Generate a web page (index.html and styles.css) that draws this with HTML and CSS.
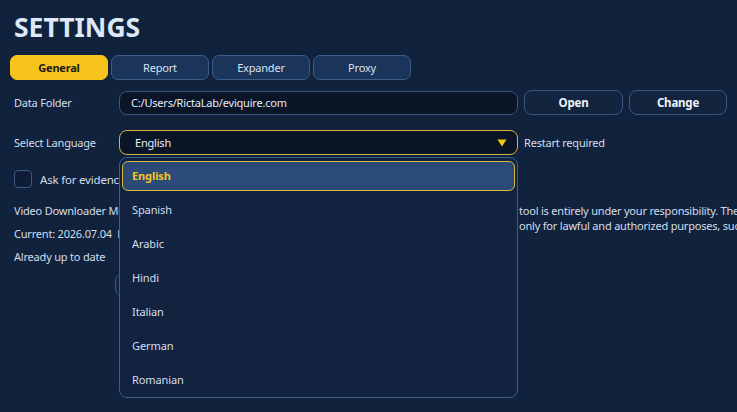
FILE: index.html
```html
<!DOCTYPE html>
<html lang="en">
<head>
<meta charset="utf-8">
<title>Settings</title>
<link rel="stylesheet" href="styles.css">
</head>
<body>
<div class="page">
  <h1 class="title">SETTINGS</h1>
  <div class="tabs">
    <button class="tab active">General</button>
    <button class="tab">Report</button>
    <button class="tab">Expander</button>
    <button class="tab">Proxy</button>
  </div>

  <div class="row row-folder">
    <span class="label">Data Folder</span>
    <div class="input">C:/Users/RictaLab/eviquire.com</div>
    <button class="btn">Open</button>
    <button class="btn btn-change">Change</button>
  </div>

  <div class="row row-lang">
    <span class="label">Select Language</span>
    <div class="select-wrap">
      <div class="select">
        <span>English</span>
        <svg class="arrow" width="10" height="8" viewBox="0 0 10 8"><path d="M0.5 0.5 H9.5 L5 7.5 Z" fill="#f5c518"/></svg>
      </div>
      <ul class="dropdown">
        <li class="opt selected">English</li>
        <li class="opt">Spanish</li>
        <li class="opt">Arabic</li>
        <li class="opt">Hindi</li>
        <li class="opt">Italian</li>
        <li class="opt">German</li>
        <li class="opt">Romanian</li>
      </ul>
    </div>
    <span class="note">Restart required</span>
  </div>

  <div class="row row-check">
    <span class="checkbox"></span>
    <span class="check-label">Ask for evidence name before capture</span>
  </div>

  <div class="info">
    <div class="info-left">
      <div class="line">Video Downloader Module: yt-dlp. The use of this</div>
      <div class="line">Current: 2026.07.04&nbsp;&nbsp;Latest: 2026.07.04</div>
      <div class="line">Already up to date</div>
      <div class="update-clip"><button class="btn btn-update"></button></div>
    </div>
    <div class="info-right">
      <div class="pline">tool is entirely under your responsibility. The software must be used</div>
      <div class="pline">only for lawful and authorized purposes, such as forensic acquisition.</div>
    </div>
  </div>
</div>
</body>
</html>
```

FILE: styles.css
```css
* { box-sizing: border-box; }
html, body { margin: 0; padding: 0; }
body {
  width: 737px;
  height: 412px;
  overflow: hidden;
  background: #11223d;
  color: #d3deec;
  font-family: "Noto Sans", "Open Sans", sans-serif;
  font-size: 11px;
  letter-spacing: -0.2px;
}
.page { padding: 0 10px; }
.title {
  margin: 9px 0 0 4px;
  font-size: 26.5px;
  line-height: 36px;
  font-weight: 700;
  color: #dde9f8;
  letter-spacing: 0;
}
.tabs {
  display: flex;
  gap: 3px;
  margin-top: 10px;
}
.tab {
  width: 98px;
  height: 25px;
  border-radius: 7px;
  border: 1px solid #3a5d8c;
  background: #1a345a;
  color: #d8e3f1;
  font-family: inherit;
  font-size: 11px;
  letter-spacing: -0.2px;
  padding: 0;
}
.tab.active {
  background: #f6c41c;
  border-color: #f6c41c;
  color: #1a1a1a;
  font-weight: 700;
}
.row {
  display: flex;
  align-items: center;
}
.label {
  width: 109px;
  padding-left: 4px;
  flex: none;
}
.row-folder { margin-top: 10px; height: 25px; }
.input {
  width: 399px;
  height: 24px;
  border: 1px solid #38557f;
  border-radius: 8px;
  background: #0a1528;
  padding-left: 11px;
  display: flex;
  align-items: center;
  color: #e4ecf6;
}
.btn {
  height: 25px;
  border: 1px solid #3a5883;
  border-radius: 8px;
  background: #13243f;
  color: #eef3fa;
  font-family: inherit;
  font-weight: 700;
  font-size: 11.5px;
  letter-spacing: -0.2px;
  padding: 0;
}
.row-folder .btn { width: 99px; margin-left: 6px; }
.row-folder .btn-change { width: 98px; }
.row-lang { margin-top: 15px; height: 25px; }
.select-wrap { position: relative; width: 399px; }
.select {
  height: 25px;
  border: 1px solid #d8b43c;
  border-radius: 8px;
  background: #0a1528;
  padding: 0 10px 0 15px;
  display: flex;
  align-items: center;
  justify-content: space-between;
  color: #e8eef7;
}
.arrow { display: block; }
.note { margin-left: 6px; }
.dropdown {
  position: absolute;
  left: 0;
  top: 27px;
  width: 399px;
  height: 241px;
  margin: 0;
  padding: 3px 2px 0 2px;
  list-style: none;
  background: #12233f;
  border: 1px solid #3a5e90;
  border-radius: 8px;
  overflow: hidden;
  z-index: 5;
  font-size: 11px;
  letter-spacing: -0.1px;
}
.opt {
  height: 34px;
  display: flex;
  align-items: center;
  padding: 0 0 2px 10px;
  color: #d3deec;
}
.opt.selected {
  height: 30px;
  margin-bottom: 2px;
  background: #2a4a78;
  border: 1px solid #dcb93a;
  border-radius: 6px;
  padding: 0 0 1px 9px;
  color: #f6c41c;
  font-weight: 700;
}
.row-check { margin-top: 15px; height: 18px; padding-left: 4px; }
.checkbox {
  width: 18px;
  height: 18px;
  border: 1px solid #3d5a82;
  border-radius: 4px;
  background: #0e1d35;
  flex: none;
}
.check-label {
  margin-left: 8px;
  width: 79px;
  overflow: hidden;
  white-space: nowrap;
  font-size: 11.5px;
}
.info {
  display: flex;
  margin-top: 11px;
}
.info-left {
  width: 509px;
  flex: none;
  padding-left: 4px;
  white-space: nowrap;
}
.line {
  line-height: 23px;
  width: 105px;
  overflow: hidden;
}
.update-clip {
  width: 105px;
  overflow: hidden;
  margin-top: 5px;
}
.btn-update {
  display: block;
  margin-left: 101px;
  width: 120px;
  height: 24px;
}
.info-right {
  padding-top: 4px;
  white-space: nowrap;
}
.pline { line-height: 15px; }
```
